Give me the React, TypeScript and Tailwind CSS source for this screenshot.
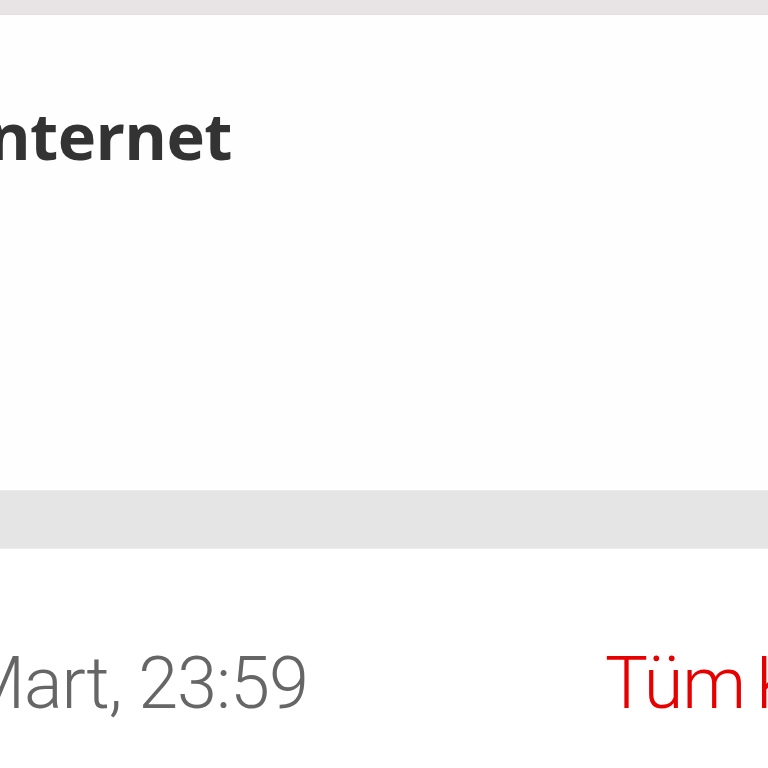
export default function App() {
  return (
    <div className="flex h-[768px] w-[768px] flex-col overflow-hidden bg-white font-['Open_Sans',sans-serif]">
      <div className="h-[15px] shrink-0 border-b border-[#e2dcdd] bg-[#e8e4e5]" />
      <div className="flex h-[475px] shrink-0 flex-col bg-[#fefefe]">
        <h2 className="ml-[-33px] mt-[88px] whitespace-nowrap text-[65px] font-bold leading-none tracking-[-0.6px] text-[#333333]">
          İnternet
        </h2>
      </div>
      <div className="h-[59px] shrink-0 border-y border-[#ececec] bg-[#e5e5e5]" />
      <div className="flex items-center whitespace-nowrap pt-[99px] font-['Roboto',sans-serif]">
        <div className="flex w-[308px] shrink-0 justify-end">
          <span className="shrink-0 text-[72px] font-light leading-none tracking-[-1px] text-[#666666]">
            31 Mart, 23:59
          </span>
        </div>
        <span className="ml-[297px] shrink-0 text-[72px] font-light leading-none tracking-[-1px] text-[#e60000] [word-spacing:-6px]">
          Tüm Kullanımlar
        </span>
      </div>
    </div>
  );
}
